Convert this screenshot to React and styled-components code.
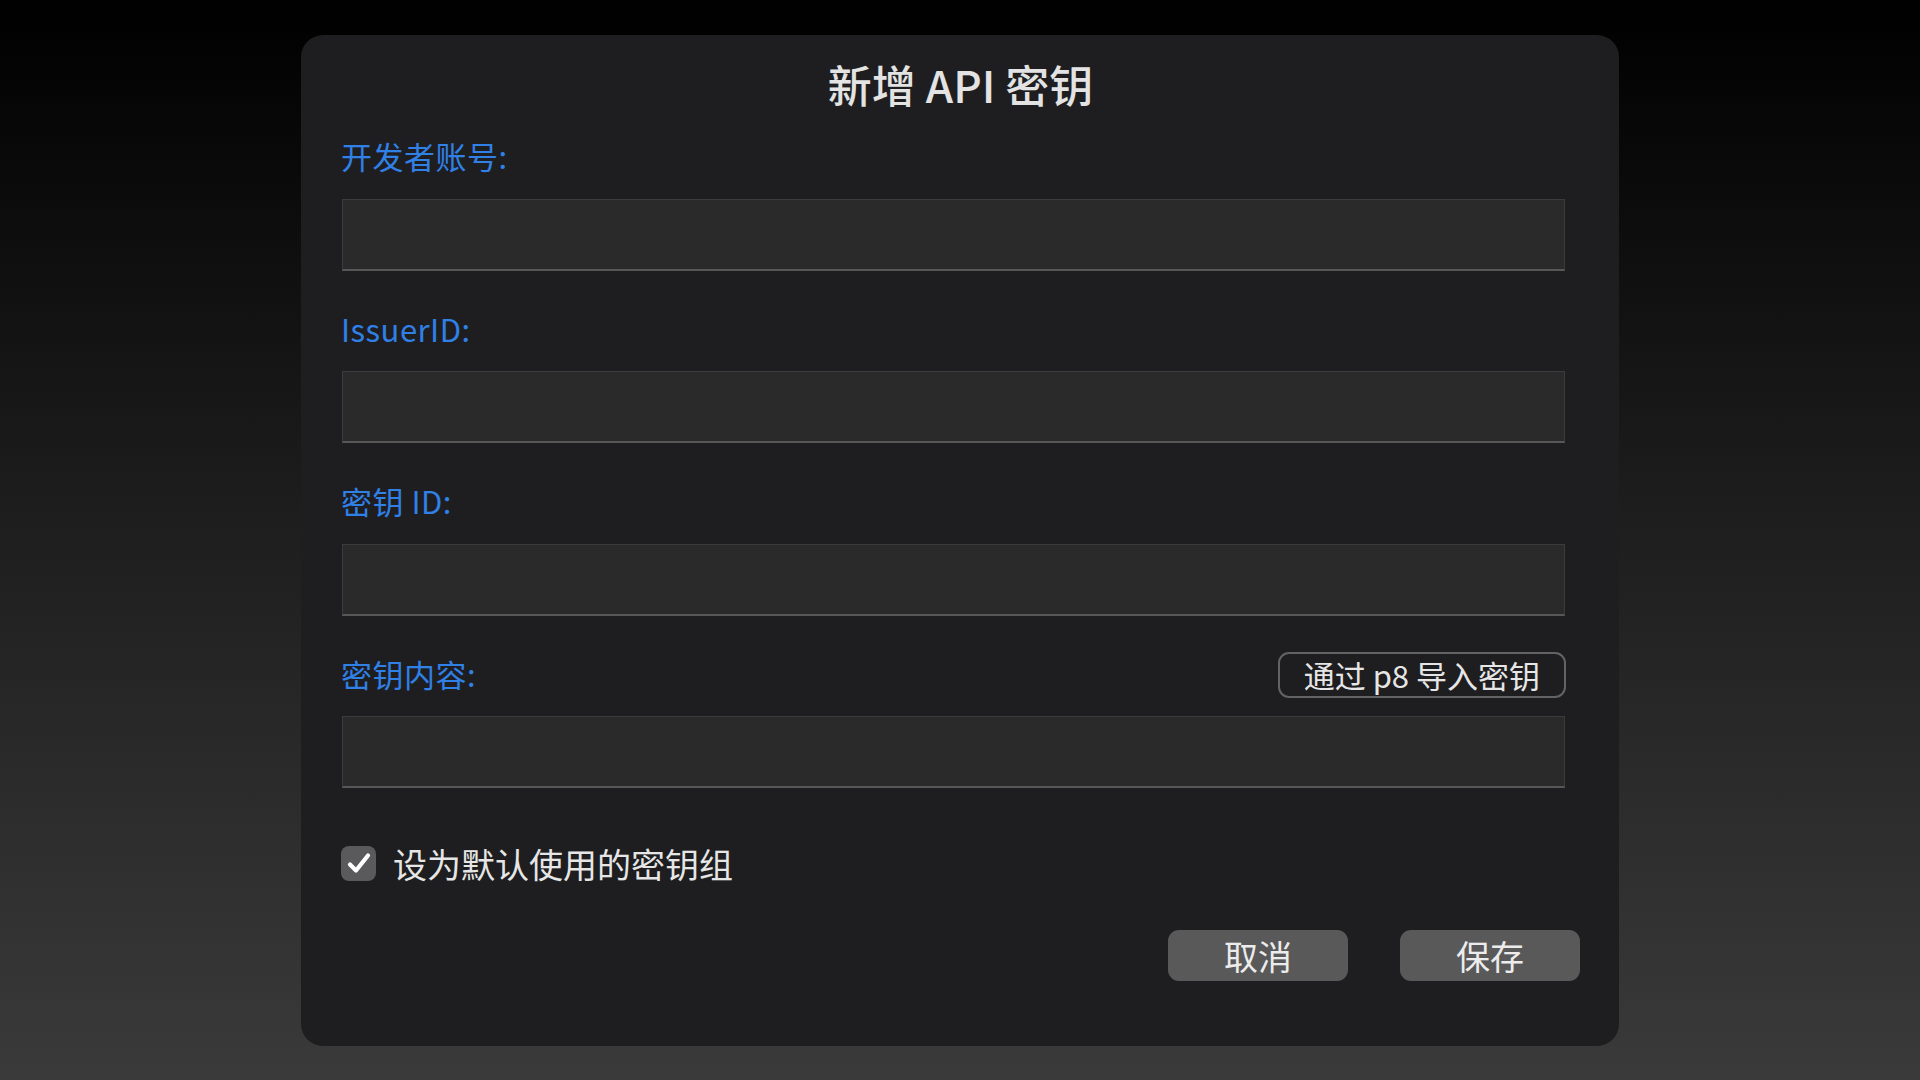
import React from "react"
import styled, { createGlobalStyle } from "styled-components"

const GlobalStyle = createGlobalStyle`
  html, body {
    margin: 0;
    padding: 0;
  }
  body {
    font-family: "Noto Sans CJK SC", "Noto Sans", sans-serif;
    background: linear-gradient(180deg, #000 0%, #1c1c1c 45%, #3a3a3a 100%);
    min-height: 100vh;
  }
`

const Stage = styled.div`
  height: 100vh;
  display: flex;
  align-items: center;
  justify-content: center;
`

const Dialog = styled.div`
  width: 1318px;
  height: 1011px;
  box-sizing: border-box;
  padding: 24px 39px 0 40px;
  background: #1e1e20;
  border-radius: 22px;
  display: flex;
  flex-direction: column;
`

const Title = styled.h1`
  margin: 0 0 24px;
  height: 50px;
  line-height: 50px;
  text-align: center;
  font-size: 44px;
  font-weight: 500;
  color: #e3e3e3;
`

const Fields = styled.div`
  display: flex;
  flex-direction: column;
  gap: 34.5px;
  margin-right: 15px;
`

const Field = styled.div`
  display: flex;
  flex-direction: column;
  gap: 20px;
`

const LabelRow = styled.div`
  height: 46px;
  display: flex;
  align-items: center;
  justify-content: space-between;
`

const Label = styled.label`
  font-size: 31px;
  color: #3080e6;
  letter-spacing: 0.5px;
`

const Input = styled.input`
  display: block;
  height: 72px;
  box-sizing: border-box;
  margin-left: 1px;
  background: #2a2a2a;
  border: 1px solid #3b3b3b;
  border-bottom: 2px solid #575757;
  outline: none;
  color: #e3e3e3;
  font-size: 28px;
  font-family: inherit;
  padding: 0 14px;
`

const OutlineButton = styled.button`
  height: 46px;
  margin: 3px -1px 0 0;
  padding: 0 24px;
  box-sizing: border-box;
  background: transparent;
  border: 2px solid #636363;
  border-radius: 11px;
  color: #e6e6e6;
  font-family: inherit;
  font-size: 31px;
  line-height: 1;
  cursor: pointer;
`

const CheckRow = styled.label`
  margin-top: 57px;
  display: flex;
  align-items: center;
  gap: 17px;
  height: 36px;
  font-size: 34px;
  color: #e6e6e6;
`

const CheckBox = styled.span`
  width: 35px;
  height: 35px;
  border-radius: 8px;
  background: #5a5a5c;
  display: flex;
  align-items: center;
  justify-content: center;
  flex-shrink: 0;
`

const Actions = styled.div`
  margin-top: 49px;
  display: flex;
  justify-content: flex-end;
  gap: 52px;
`

const Button = styled.button`
  width: 180px;
  height: 51px;
  background: #59595a;
  border: none;
  border-radius: 11px;
  color: #ececec;
  font-family: inherit;
  font-size: 34px;
  line-height: 1;
  cursor: pointer;
`

const fields = ["开发者账号:", "IssuerID:", "密钥 ID:", "密钥内容:"]

export default function App() {
  return (
    <>
      <GlobalStyle />
      <Stage>
        <Dialog>
          <Title>新增 API 密钥</Title>
          <Fields>
            {fields.map((f, i) => (
              <Field key={f}>
                <LabelRow>
                  <Label>{f}</Label>
                  {i === 3 && <OutlineButton>通过 p8 导入密钥</OutlineButton>}
                </LabelRow>
                <Input />
              </Field>
            ))}
          </Fields>
          <CheckRow>
            <CheckBox>
              <svg width="24" height="22" viewBox="0 0 24 22">
                <path
                  d="M3 12.5 L9 18.5 L21 3.5"
                  fill="none"
                  stroke="#fff"
                  strokeWidth="4.2"
                  strokeLinecap="round"
                  strokeLinejoin="round"
                />
              </svg>
            </CheckBox>
            设为默认使用的密钥组
          </CheckRow>
          <Actions>
            <Button>取消</Button>
            <Button>保存</Button>
          </Actions>
        </Dialog>
      </Stage>
    </>
  )
}
